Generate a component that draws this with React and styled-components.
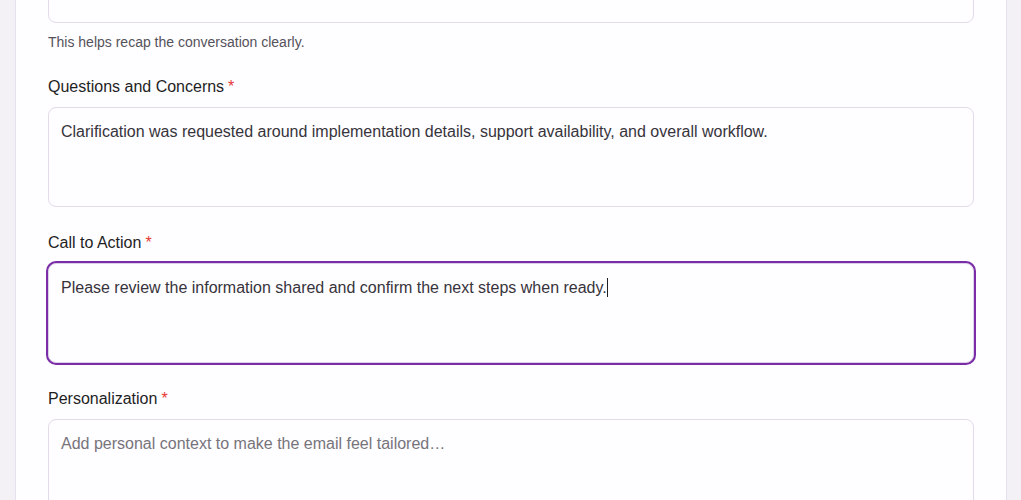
import React from 'react'
import styled, { createGlobalStyle, css } from 'styled-components'

const GlobalStyle = createGlobalStyle`
  html, body {
    margin: 0;
    padding: 0;
    background: #f4f1f6;
    font-family: "Liberation Sans", Arial, sans-serif;
    overflow: hidden;
  }
`

const Page = styled.div`
  padding: 0 14px 0 15px;
  height: 500px;
  overflow: hidden;
`

const Card = styled.div`
  margin-top: -110px;
  background: #fefdff;
  border: 1px solid #e7e0ee;
  border-radius: 12px;
  padding: 32px 32px 60px 32px;
`

const Field = styled.div`
  display: flex;
  flex-direction: column;
  & + & {
    margin-top: 25px;
  }
`

const Label = styled.label`
  font-size: 16px;
  line-height: 21px;
  color: #1f1f24;
  margin-bottom: 10px;
`

const Required = styled.span`
  color: #e53935;
  margin-left: 4px;
`

const TextArea = styled.textarea`
  box-sizing: border-box;
  display: block;
  width: 100%;
  height: 100px;
  margin: 0;
  resize: none;
  font-family: "Liberation Sans", Arial, sans-serif;
  font-size: 16px;
  line-height: 22px;
  color: #37343b;
  background: #fefdff;
  border: 1px solid #e3daea;
  border-radius: 8px;
  padding: 13px 12px 11px;
  outline: none;
  white-space: pre-wrap;

  &::placeholder {
    color: #77747b;
  }

  ${p => p.$active && css`
    box-shadow: 0 0 0 2px #7a2da6;
    border-color: #ddd0ea;
  `}
`

const Caret = styled.span`
  display: inline-block;
  width: 1px;
  height: 19px;
  vertical-align: -4px;
  background: #1f1f24;
`

const Help = styled.p`
  margin: 10px 0 0;
  font-size: 14px;
  line-height: 18px;
  color: #55525a;
`

function FormField({ label, value, placeholder, help, active }) {
  return (
    <Field>
      {label && (
        <Label>
          {label}
          <Required>*</Required>
        </Label>
      )}
      {active ? (
        <TextArea as="div" $active>
          {value}
          <Caret />
        </TextArea>
      ) : (
        <TextArea defaultValue={value} placeholder={placeholder} />
      )}
      {help && <Help>{help}</Help>}
    </Field>
  )
}

export default function App() {
  return (
    <>
      <GlobalStyle />
      <Page>
        <Card>
          {/* earlier field, scrolled above the top of the view */}
          <FormField
            value=""
            help="This helps recap the conversation clearly."
          />
          <FormField
            label="Questions and Concerns"
            value="Clarification was requested around implementation details, support availability, and overall workflow."
          />
          <FormField
            label="Call to Action"
            value="Please review the information shared and confirm the next steps when ready."
            active
          />
          <FormField
            label="Personalization"
            value=""
            placeholder="Add personal context to make the email feel tailored…"
          />
        </Card>
      </Page>
    </>
  )
}
